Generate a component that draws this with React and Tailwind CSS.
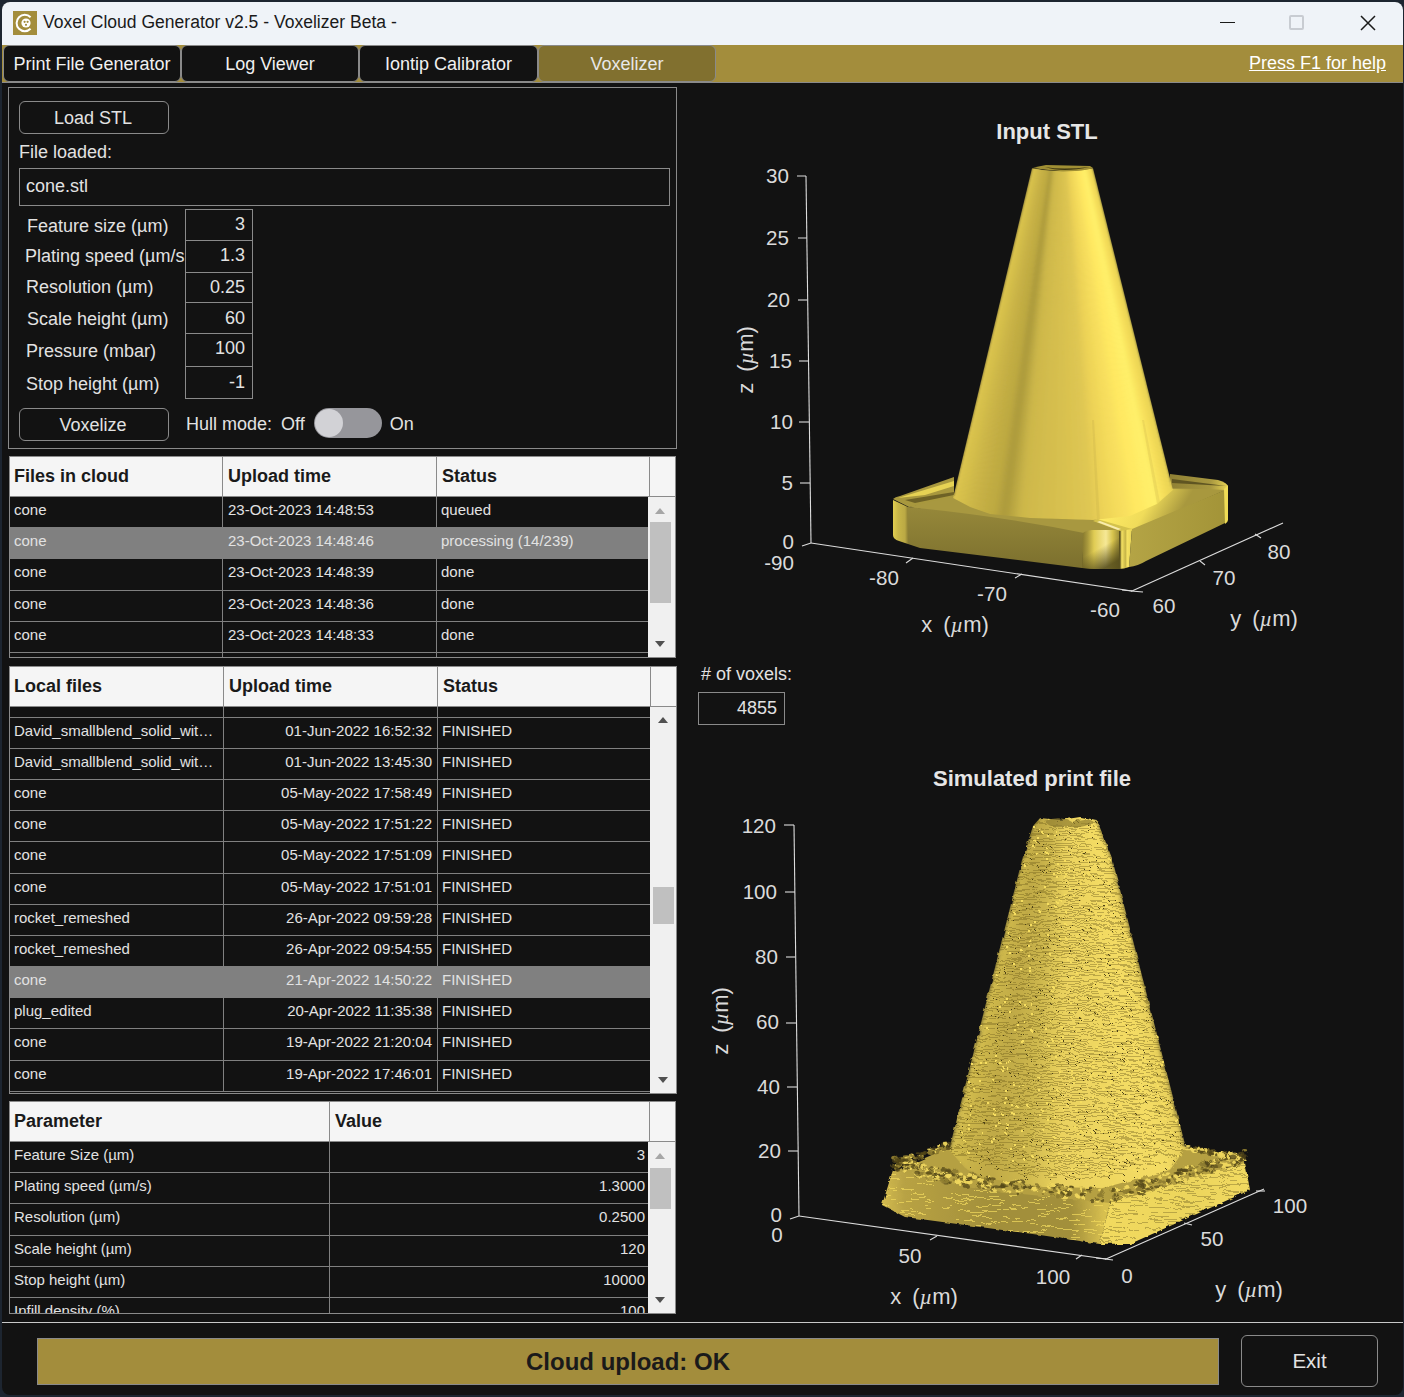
const cloudFiles = [
  ["cone", "23-Oct-2023 14:48:53", "queued"],
  ["cone", "23-Oct-2023 14:48:46", "processing (14/239)", true],
  ["cone", "23-Oct-2023 14:48:39", "done"],
  ["cone", "23-Oct-2023 14:48:36", "done"],
  ["cone", "23-Oct-2023 14:48:33", "done"],
  ["", "", ""],
];

const localFiles = [
  ["David_smallblend_solid_wit…", "01-Jun-2022 16:52:32", "FINISHED"],
  ["David_smallblend_solid_wit…", "01-Jun-2022 13:45:30", "FINISHED"],
  ["cone", "05-May-2022 17:58:49", "FINISHED"],
  ["cone", "05-May-2022 17:51:22", "FINISHED"],
  ["cone", "05-May-2022 17:51:09", "FINISHED"],
  ["cone", "05-May-2022 17:51:01", "FINISHED"],
  ["rocket_remeshed", "26-Apr-2022 09:59:28", "FINISHED"],
  ["rocket_remeshed", "26-Apr-2022 09:54:55", "FINISHED"],
  ["cone", "21-Apr-2022 14:50:22", "FINISHED", true],
  ["plug_edited", "20-Apr-2022 11:35:38", "FINISHED"],
  ["cone", "19-Apr-2022 21:20:04", "FINISHED"],
  ["cone", "19-Apr-2022 17:46:01", "FINISHED"],
];

const params = [
  ["Feature Size (µm)", "3"],
  ["Plating speed (µm/s)", "1.3000"],
  ["Resolution (µm)", "0.2500"],
  ["Scale height (µm)", "120"],
  ["Stop height (µm)", "10000"],
  ["Infill density (%)", "100"],
];

const fields = [
  { label: "Feature size (µm)", value: "3", row: "h-[32px]", lab: "pl-[8px] pt-[4px]", val: "pt-[1px]" },
  { label: "Plating speed (µm/s", value: "1.3", row: "h-[32px]", lab: "pl-[6px] pt-[2px]", val: "pt-[1px]" },
  { label: "Resolution (µm)", value: "0.25", row: "h-[30px]", lab: "pl-[7px] pt-[1px]", val: "pt-[1px]" },
  { label: "Scale height (µm)", value: "60", row: "h-[31px]", lab: "pl-[8px] pt-[3px]", val: "pt-[2px]" },
  { label: "Pressure (mbar)", value: "100", row: "h-[33px]", lab: "pl-[7px] pt-[4px]", val: "pt-[1px]" },
  { label: "Stop height (µm)", value: "-1", row: "h-[32px]", lab: "pl-[7px] pt-[4px]", val: "pt-[2px]" },
];

const tabs = [
  ["Print File Generator", "w-[178px]"],
  ["Log Viewer", "w-[178px]"],
  ["Iontip Calibrator", "w-[179px]"],
  ["Voxelizer", "w-[178px]"],
];

function Arrow({ up, dark }) {
  return (
    <svg width="12" height="8" viewBox="0 0 12 8" className="block">
      <path d={up ? "M6 1 L11 7 L1 7 Z" : "M1 1 L11 1 L6 7 Z"} fill={dark ? "#505050" : "#a6a6a6"} />
    </svg>
  );
}

function Scrollbar({ thumbTop, thumbHeight, upDark, upTop, wide }) {
  return (
    <div className={`relative shrink-0 bg-[#f0f0f0] ${wide ? "w-[26px]" : "w-[27px]"}`}>
      <div className={`absolute ${wide ? "left-[7px]" : "left-[6px]"}`} style={{ top: upTop }}>
        <Arrow up dark={upDark} />
      </div>
      <div className={`absolute w-[21px] bg-[#c0c0c0] ${wide ? "left-[3px]" : "left-[2px]"}`} style={{ top: thumbTop, height: thumbHeight }} />
      <div className={`absolute bottom-[9px] ${wide ? "left-[7px]" : "left-[6px]"}`}>
        <Arrow dark />
      </div>
    </div>
  );
}

function DataTable({ className, columns, children, scrollbar }) {
  return (
    <div className={`flex flex-col overflow-hidden border border-[#8a8a8a] bg-[#f5f5f5] ${className}`}>
      <div className="flex h-[40px] shrink-0 border-b border-[#8a8a8a]">
        {columns.map((c, i) => (
          <div
            key={c.name}
            className={`flex items-center border-r border-[#8a8a8a] text-[18px] font-bold text-[#1a1a1a] ${i === 0 ? "pl-[4px]" : "pl-[5px]"} ${c.width}`}
          >
            {c.name}
          </div>
        ))}
      </div>
      <div className="flex min-h-0 flex-1">
        <div className="min-w-0 flex-1 overflow-hidden bg-[#121212]">{children}</div>
        <Scrollbar {...scrollbar} />
      </div>
    </div>
  );
}

function Row({ cells, widths, selected, aligns = [] }) {
  return (
    <div className={`flex h-[31.2px] border-b border-[#808080] text-[15px] text-[#e2e2e2] ${selected ? "bg-[#808080]" : ""}`}>
      {cells.map((cell, i) => (
        <div
          key={i}
          className={`h-full shrink-0 whitespace-nowrap pb-[4px] leading-[26px] ${widths[i]} ${i < cells.length - 1 ? "border-r border-[#808080]" : ""} ${aligns[i] === "right" ? "pr-[4px] text-right" : aligns[i] === "time" ? "pr-[5px] text-right" : i === 1 ? "pl-[5px]" : "pl-[4px]"}`}
        >
          {cell}
        </div>
      ))}
    </div>
  );
}

function Button({ children, className }) {
  return (
    <button className={`rounded-[6px] border border-[#8a8a8a] pr-[2px] text-center text-[18px] text-[#e2e2e2] ${className}`}>{children}</button>
  );
}

// piecewise interpolation along a list of points, t in 0..1
function along(pts, t) {
  const f = Math.min(t * (pts.length - 1), pts.length - 1.0001);
  const i = Math.floor(f);
  const k = f - i;
  return [pts[i][0] + (pts[i + 1][0] - pts[i][0]) * k, pts[i][1] + (pts[i + 1][1] - pts[i][1]) * k];
}

function colorAt(stops, t) {
  let i = 0;
  while (i < stops.length - 2 && t > stops[i + 1][0]) i++;
  const [t0, c0] = stops[i];
  const [t1, c1] = stops[i + 1];
  const k = Math.max(0, Math.min(1, (t - t0) / (t1 - t0)));
  const rgb = [0, 1, 2].map((n) => Math.round(c0[n] + (c1[n] - c0[n]) * k));
  return `rgb(${rgb.join(",")})`;
}

function makeRandom(seed) {
  let s = seed;
  return () => {
    s = (s * 1664525 + 1013904223) % 4294967296;
    return s / 4294967296;
  };
}

const toPoints = (pts) => pts.map((q) => q.map((v) => v.toFixed(1)).join(",")).join(" ");

function Strips({ top, bottom, stops, n = 70 }) {
  const quads = [];
  for (let s = 0; s < n; s++) {
    const a = s / n;
    const b = (s + 1) / n;
    const fill = colorAt(stops, (a + b) / 2);
    quads.push(<polygon key={s} points={toPoints([along(top, a), along(top, b), along(bottom, b), along(bottom, a)])} fill={fill} stroke={fill} strokeWidth="1.2" />);
  }
  return <g>{quads}</g>;
}

// stair-stepped print layers running from edge a to edge b
function Contours({ a0, a1, b0, b1, spacing, sag = 0, stroke, opacity, seed, keep = 0.8 }) {
  const rand = makeRandom(seed);
  const levels = Math.round(Math.abs(a1[1] - a0[1]) / spacing);
  let d = "";
  for (let l = 0; l <= levels; l++) {
    const k = l / levels;
    const ax = a0[0] + (a1[0] - a0[0]) * k;
    const ay = a0[1] + (a1[1] - a0[1]) * k;
    const bx = b0[0] + (b1[0] - b0[0]) * k;
    const by = b0[1] + (b1[1] - b0[1]) * k;
    let x = ax;
    while (x < bx) {
      const w = 3 + rand() * 11;
      const u = (x - ax) / (bx - ax);
      const y = Math.round(ay + (by - ay) * u + Math.sin(u * Math.PI) * sag * (0.35 + k * 0.65));
      if (rand() < keep) d += `M${x.toFixed(1)} ${y}H${Math.min(x + w, bx).toFixed(1)}`;
      x += w;
    }
  }
  return <path d={d} stroke={stroke} strokeOpacity={opacity} strokeWidth="1" fill="none" shapeRendering="crispEdges" />;
}

function Specks({ count, box, color, size, seed }) {
  const rand = makeRandom(seed);
  let d = "";
  for (let i = 0; i < count; i++) {
    const x = Math.round(box[0] + rand() * box[2]);
    const y = Math.round(box[1] + rand() * box[3]);
    d += `M${x} ${y}h${size}v${size}h-${size}Z`;
  }
  return <path d={d} fill={color} shapeRendering="crispEdges" />;
}

const TICK = "#dcdcdc";
const AXIS_TEXT = "#dadada";

function Unit({ axis }) {
  return (
    <>
      {axis}
      {"\u2002("}
      <tspan fontFamily="'Liberation Serif', serif" fontStyle="italic">µ</tspan>
      {"m)"}
    </>
  );
}

function AxisLines({ lines }) {
  return (
    <g stroke={TICK} strokeWidth="1.1" fill="none">
      {lines.map((d, i) => (
        <path key={i} d={d} />
      ))}
    </g>
  );
}

function Labels({ items }) {
  return (
    <g fill={AXIS_TEXT} fontSize="20.6">
      {items.map(([text, x, y, anchor]) => (
        <text key={`${text}-${x}`} x={x} y={y} textAnchor={anchor || "middle"}>
          {text}
        </text>
      ))}
    </g>
  );
}

function InputPlot() {
  const coneTop = [[1032, 169], [1045, 171], [1062, 172], [1080, 171], [1093, 169]];
  const coneBottom = [[953, 498], [970, 507], [990, 514], [1030, 518], [1093, 520], [1130, 516], [1157, 504], [1173, 490]];
  const stops = [
    [0, [222, 198, 80]],
    [0.07, [214, 192, 76]],
    [0.2, [200, 178, 70]],
    [0.3, [190, 170, 66]],
    [0.34, [172, 154, 60]],
    [0.4, [205, 183, 74]],
    [0.56, [222, 198, 82]],
    [0.62, [238, 212, 88]],
    [0.75, [255, 232, 98]],
    [0.85, [255, 240, 106]],
    [0.93, [246, 222, 90]],
    [1, [232, 210, 84]],
  ];
  return (
    <svg viewBox="690 83 710 577" className="block h-[577px] w-[710px] shrink-0">
      <defs>
        <linearGradient id="frontFace" x1="0" y1="0" x2="0" y2="1">
          <stop offset="0" stopColor="#96883a" />
          <stop offset="1" stopColor="#7c702e" />
        </linearGradient>
        <linearGradient id="leftCorner" x1="0" y1="0" x2="1" y2="0">
          <stop offset="0" stopColor="#e2ce50" />
          <stop offset="0.35" stopColor="#c8b648" />
          <stop offset="0.8" stopColor="#bba944" />
          <stop offset="1" stopColor="#8d7f34" />
        </linearGradient>
        <linearGradient id="frontCorner" x1="1083" y1="0" x2="1120" y2="0" gradientUnits="userSpaceOnUse">
          <stop offset="0" stopColor="#8a7c30" />
          <stop offset="0.12" stopColor="#a8983c" />
          <stop offset="0.3" stopColor="#e0cc54" />
          <stop offset="0.62" stopColor="#f6e896" />
          <stop offset="0.8" stopColor="#d8c44e" />
          <stop offset="1" stopColor="#9a8a36" />
        </linearGradient>
        <linearGradient id="cornerShade" x1="0" y1="0" x2="0.55" y2="1">
          <stop offset="0.55" stopColor="#4f4719" stopOpacity="0" />
          <stop offset="1" stopColor="#4f4719" stopOpacity="0.85" />
        </linearGradient>
        <linearGradient id="rightStripes" x1="1120" y1="0" x2="1132" y2="0" gradientUnits="userSpaceOnUse">
          <stop offset="0" stopColor="#5c5320" />
          <stop offset="0.15" stopColor="#f5e262" />
          <stop offset="0.45" stopColor="#c7b548" />
          <stop offset="0.6" stopColor="#f5e262" />
          <stop offset="1" stopColor="#e8d456" />
        </linearGradient>
        <linearGradient id="rightFace" x1="0" y1="0" x2="1" y2="0">
          <stop offset="0" stopColor="#b4a445" />
          <stop offset="1" stopColor="#a39438" />
        </linearGradient>
        <linearGradient id="rightTop" x1="1110" y1="495" x2="1170" y2="530" gradientUnits="userSpaceOnUse">
          <stop offset="0" stopColor="#ffec66" />
          <stop offset="0.55" stopColor="#f0dc5a" />
          <stop offset="1" stopColor="#a8983e" />
        </linearGradient>
        <linearGradient id="backRight" x1="0" y1="0" x2="1" y2="0">
          <stop offset="0" stopColor="#8f8034" />
          <stop offset="0.7" stopColor="#a89840" />
          <stop offset="1" stopColor="#e6d254" />
        </linearGradient>
        <filter id="soft" x="-5%" y="-5%" width="110%" height="110%">
          <feGaussianBlur stdDeviation="1.4 0" />
        </filter>
        <clipPath id="coneClip">
          <polygon points={toPoints([[1032, 168], [1093, 168], ...[...coneBottom].reverse()])} />
        </clipPath>
      </defs>
      <text x="1047" y="139" fill="#e6e6e6" fontSize="22" fontWeight="700" textAnchor="middle">Input STL</text>

      <AxisLines
        lines={[
          "M806 176 L811 543", "M797 176 L806 176", "M798 238 L807 238", "M798 300 L807 300", "M799 361 L808 361", "M799 422 L809 422", "M800 483 L810 483", "M802 546 L811 543",
          "M811 543 L1132 591", "M906 563 L913 558", "M1015 578 L1022 574", "M1122 590 L1132 591",
          "M1132 591 L1283 523", "M1131 591 L1143 592", "M1200 561 L1205 565", "M1255 534 L1261 538",
        ]}
      />
      <Labels
        items={[
          ["30", 789, 183, "end"], ["25", 789, 245, "end"], ["20", 790, 307, "end"], ["15", 792, 368, "end"], ["10", 793, 429, "end"], ["5", 793, 490, "end"], ["0", 794, 549, "end"],
          ["-90", 794, 570, "end"], ["-80", 884, 585], ["-70", 992, 601], ["-60", 1105, 617],
          ["60", 1164, 613], ["70", 1224, 585], ["80", 1279, 559],
        ]}
      />
      <g fill={AXIS_TEXT} fontSize="22">
        <text x="955" y="632" textAnchor="middle"><Unit axis="x" /></text>
        <text x="1264" y="626" textAnchor="middle"><Unit axis="y" /></text>
        <text transform="translate(753 360) rotate(-90)" textAnchor="middle"><Unit axis="z" /></text>
      </g>

      {/* base of the cone, back surfaces first */}
      <path d="M893 499 Q895 497 900 496 L954 477 L954 499 L909 507 Z" fill="#a8983e" />
      <path d="M898 498 L954 481 L954 486 L925 495 Z" fill="#e6d254" />
      <path d="M905 500 L954 492 L954 495 L915 503 Z" fill="#6e6226" />
      <path d="M1170 474 L1218 480 Q1228 483 1228 487 L1225 491 L1170 494 Z" fill="url(#backRight)" />
      <path d="M1172 483 L1226 486 L1172 479 Z" fill="#5f5522" />
      <path d="M908 507 L954 496 L1172 488 L1225 490 L1132 531 L1084 534 Z" fill="#a89840" />
      <path d="M1095 518 L1160 500 L1172 489 L1225 490 L1132 530 L1120 530 Z" fill="url(#rightTop)" />
      <path d="M1132 529 L1225 490 L1225 523 L1146 561 Q1138 566 1129 567 Z" fill="url(#rightFace)" />
      <path d="M1224 489 L1228 485 L1228 520 Q1228 522 1225 524 Z" fill="#efdc56" />
      <path d="M908 507 Q1000 516 1084 533 L1082 568 L920 548 L908 544 Z" fill="url(#frontFace)" />
      <path d="M893 500 L908 507 L908 544 L899 541 Q893 539 893 535 Z" fill="url(#leftCorner)" />
      <path d="M1083 533 Q1085 531 1092 530 L1120 530 L1120 569 L1100 569 Q1090 569 1082 568 Z" fill="url(#frontCorner)" />
      <path d="M1083 533 Q1085 531 1092 530 L1120 530 L1120 569 L1100 569 Q1090 569 1082 568 Z" fill="url(#cornerShade)" />
      <path d="M1119 530 L1132 528 L1129 567 Q1124 569 1119 569 Z" fill="url(#rightStripes)" />
      <path d="M1097 519 L1132 529 L1120 531 L1093 521 Z" fill="#d4c24c" />
      <path d="M1100 521 L1121 529 L1118 530 L1097 522 Z" fill="#f8ecae" />

      {/* cone body */}
      <g clipPath="url(#coneClip)">
        <g filter="url(#soft)">
          <Strips top={coneTop} bottom={coneBottom} stops={stops} />
        </g>
        <path d="M1092 420 L1097 522 L1100 522 L1094 420 Z" fill="#c7b04a" opacity="0.3" />
        <path d="M1142 420 L1157 504 L1160 502 L1144 420 Z" fill="#d8bf50" opacity="0.35" />
      </g>
      <path d="M1033 168 Q1040 166 1046 165 L1090 166 L1093 168 Q1080 172 1060 171 Q1046 170 1033 168 Z" fill="#a08f34" />
      <path d="M1045 167 Q1062 173 1090 167 Q1062 170 1045 167 Z" fill="#3f3812" />
    </svg>
  );
}

function PrintPlot() {
  const coneTop = [[1022, 860], [1033, 826], [1040, 818], [1060, 820], [1080, 817], [1097, 820], [1112, 858]];
  const coneBottom = [[949, 1150], [965, 1168], [985, 1178], [1043, 1187], [1103, 1188], [1170, 1170], [1186, 1148]];
  const stops = [
    [0, [218, 196, 84]],
    [0.1, [206, 184, 76]],
    [0.35, [192, 170, 70]],
    [0.45, [206, 184, 78]],
    [0.55, [234, 210, 94]],
    [0.8, [244, 220, 100]],
    [1, [230, 206, 90]],
  ];
  const rimFront = [[893, 1170], [947, 1183], [1003, 1192], [1110, 1203], [1187, 1180], [1245, 1163]];
  const rand = makeRandom(17);
  const blobs = [];
  const addBlobs = (line, count, spread) => {
    for (let i = 0; i < count; i++) {
      const [x, y] = along(line, rand());
      const pick = rand();
      blobs.push(
        <ellipse
          key={blobs.length}
          cx={x}
          cy={y - rand() * spread}
          rx={1 + rand() * 2.8}
          ry={0.7 + rand() * 1.6}
          fill={pick < 0.45 ? "#54481a" : pick < 0.7 ? "#8f7d30" : "#efd75e"}
          opacity={pick < 0.45 ? 0.75 : 0.95}
        />
      );
    }
  };
  addBlobs(rimFront, 430, 13);
  addBlobs([[895, 1166], [950, 1148]], 70, 6);
  addBlobs([[1188, 1150], [1244, 1161]], 80, 5);

  const coneOutline = toPoints([[1022, 860], [1033, 826], [1040, 818], [1060, 820], [1080, 817], [1097, 820], [1112, 858], ...[...coneBottom].reverse()]);

  return (
    <svg viewBox="690 760 710 560" className="block h-[560px] w-[710px] shrink-0">
      <defs>
        <filter id="rough" x="-3%" y="-3%" width="106%" height="106%">
          <feTurbulence type="fractalNoise" baseFrequency="0.14" numOctaves="3" seed="4" result="noise" />
          <feDisplacementMap in="SourceGraphic" in2="noise" scale="4" />
        </filter>
        <filter id="softVoxel" x="-5%" y="-5%" width="110%" height="110%">
          <feGaussianBlur stdDeviation="2.5 0" />
        </filter>
        <clipPath id="printCone">
          <polygon points={coneOutline} />
        </clipPath>
        <clipPath id="printLeft">
          <polygon points="893,1170 947,1183 1003,1192 1110,1203 1100,1244 1040,1235 905,1217 882,1205" />
        </clipPath>
        <clipPath id="printRight">
          <polygon points="1110,1203 1187,1180 1245,1163 1250,1190 1130,1244 1100,1244" />
        </clipPath>
        <linearGradient id="voxelFront" x1="882" y1="0" x2="1104" y2="0" gradientUnits="userSpaceOnUse">
          <stop offset="0" stopColor="#d4bc50" />
          <stop offset="0.1" stopColor="#b8a244" />
          <stop offset="0.5" stopColor="#a28f3a" />
          <stop offset="0.85" stopColor="#a28f3a" />
          <stop offset="1" stopColor="#d8c050" />
        </linearGradient>
        <linearGradient id="voxelRight" x1="1100" y1="0" x2="1250" y2="0" gradientUnits="userSpaceOnUse">
          <stop offset="0" stopColor="#f2da5e" />
          <stop offset="0.6" stopColor="#ecd55c" />
          <stop offset="1" stopColor="#f2da60" />
        </linearGradient>
      </defs>
      <text x="1032" y="786" fill="#e6e6e6" fontSize="22" fontWeight="700" textAnchor="middle">Simulated print file</text>

      <AxisLines
        lines={[
          "M794 825 L799 1216", "M784 825 L794 825", "M785 892 L795 892", "M786 957 L795 957", "M786 1023 L796 1023", "M787 1087 L797 1087", "M788 1151 L798 1151", "M790 1219 L799 1216",
          "M799 1216 L1106 1259", "M930 1240 L937 1236", "M1076 1259 L1082 1255", "M1096 1258 L1106 1259",
          "M1106 1259 L1264 1189", "M1105 1259 L1113 1260", "M1184 1223 L1192 1225", "M1256 1191 L1265 1191",
        ]}
      />
      <Labels
        items={[
          ["120", 776, 833, "end"], ["100", 777, 899, "end"], ["80", 778, 964, "end"], ["60", 779, 1029, "end"], ["40", 780, 1094, "end"], ["20", 781, 1158, "end"], ["0", 782, 1222, "end"],
          ["0", 777, 1242], ["50", 910, 1263], ["100", 1053, 1284], ["0", 1127, 1283], ["50", 1212, 1246], ["100", 1290, 1213],
        ]}
      />
      <g fill={AXIS_TEXT} fontSize="22">
        <text x="924" y="1304" textAnchor="middle"><Unit axis="x" /></text>
        <text x="1249" y="1297" textAnchor="middle"><Unit axis="y" /></text>
        <text transform="translate(728 1021) rotate(-90)" textAnchor="middle"><Unit axis="z" /></text>
      </g>

      <g filter="url(#rough)">
        <path d="M893 1172 L950 1147 L1188 1147 L1240 1156 Q1246 1162 1245 1168 L1110 1206 L1000 1196 L890 1180 Z" fill="#b5a042" />
        <polygon points="893,1170 947,1183 1003,1192 1110,1203 1100,1244 1040,1235 905,1217 882,1205" fill="url(#voxelFront)" />
        <g clipPath="url(#printLeft)">
          <Contours a0={[880, 1170]} a1={[880, 1210]} b0={[1110, 1204]} b1={[1110, 1246]} spacing={3} stroke="#f2da5c" opacity={0.7} seed={3} keep={0.35} />
        </g>
        <polygon points="1110,1203 1187,1180 1245,1163 1250,1190 1130,1244 1100,1244" fill="url(#voxelRight)" />
        <g clipPath="url(#printRight)">
          <Contours a0={[1095, 1200]} a1={[1095, 1246]} b0={[1252, 1160]} b1={[1252, 1194]} spacing={3} sag={2} stroke="#6e5f20" opacity={0.4} seed={5} keep={0.6} />
        </g>

        <g clipPath="url(#printCone)">
          <g filter="url(#softVoxel)">
            <Strips top={coneTop} bottom={coneBottom} stops={stops} />
          </g>
          <Contours a0={[1020, 816]} a1={[940, 1150]} b0={[1100, 816]} b1={[1190, 1150]} spacing={2.3} sag={28} stroke="#75651f" opacity={0.42} seed={7} keep={0.85} />
          <Specks count={1300} box={[950, 816, 240, 372]} color="#4e4316" size={1} seed={11} />
          <Specks count={550} box={[950, 816, 240, 372]} color="#f6de60" size={1.5} seed={23} />
        </g>
        <path d="M1044 821 Q1060 815 1072 822 Q1086 816 1094 822 Q1080 830 1066 826 Q1054 830 1044 821 Z" fill="#8f7d30" opacity="0.7" />
        {blobs}
      </g>
    </svg>
  );
}

export default function App() {
  const cols1 = ["w-[213px]", "w-[214px]", "w-[212px]"];
  const cols2 = ["w-[214px]", "w-[214px]", "w-[212px]"];
  const cols3 = ["w-[320px]", "w-[319px]"];
  return (
    <div className="h-[1397px] w-[1404px] overflow-hidden bg-[#1d2530] pt-[2px] pl-[2px] pr-[1px] font-['Liberation_Sans',Arial,sans-serif]">
      <div className="flex h-[1393px] flex-col overflow-hidden rounded-[8px] bg-[#121212]">
        {/* title bar */}
        <div className="flex h-[43px] shrink-0 items-center bg-[#eff3f8] pb-[2px] pl-[11px] text-[#1a1a1a]">
          <svg width="24" height="24" viewBox="0 0 24 24" className="shrink-0">
            <rect width="24" height="24" fill="#a38d3c" />
            <path d="M17.6 6.2 A8.2 8.2 0 1 0 17.6 17.8" fill="none" stroke="#fff" strokeWidth="2" />
            <circle cx="13" cy="12" r="4.6" fill="#fff" />
            <circle cx="11.6" cy="10.8" r="1.1" fill="#a38d3c" />
            <circle cx="14.6" cy="10.8" r="1.1" fill="#a38d3c" />
            <circle cx="13" cy="13.8" r="1.1" fill="#a38d3c" />
          </svg>
          <span className="ml-[6px] text-[17.55px]">Voxel Cloud Generator v2.5 - Voxelizer Beta -</span>
          <div className="ml-auto flex items-center pr-[27px]">
            <div className="h-[1.5px] w-[15px] bg-[#1a1a1a]" />
            <div className="ml-[54px] h-[15px] w-[15px] rounded-[2px] border-2 border-[#c8ccd2]" />
            <svg width="16" height="16" viewBox="0 0 16 16" className="ml-[56px]">
              <path d="M1 1 L15 15 M15 1 L1 15" stroke="#1a1a1a" strokeWidth="1.5" />
            </svg>
          </div>
        </div>

        {/* tabs */}
        <div className="flex h-[38px] shrink-0 items-end border-b border-[#8a8a8a] bg-[#a38d3c] pl-px text-[18px] text-[#f0f0f0]">
          {tabs.map(([t, w], i) => (
            <div
              key={t}
              className={`flex h-[37px] items-center justify-center rounded-[6px] border border-[#8a8a8a] pt-px ${w} ${i === 3 ? "bg-[#81702f] text-[#e8e8e8]" : "bg-[#121212]"}`}
            >
              {t}
            </div>
          ))}
          <a className="mb-[5px] ml-auto mr-[17px] text-[18px] text-white underline">Press F1 for help</a>
        </div>

        {/* main */}
        <div className="flex min-h-0 flex-1">
          <div className="ml-[6px] flex w-[669px] shrink-0 flex-col pt-[4px]">
            <div className="h-[362px] shrink-0 border border-[#8a8a8a] px-[10px] pt-[13px] text-[18px] text-[#e2e2e2]">
              <Button className="block h-[33px] w-[150px] pt-[1px]">Load STL</Button>
              <div className="mt-[7px] h-[27px] leading-[22px]">File loaded:</div>
              <div className="flex h-[38px] w-[651px] items-center border border-[#8a8a8a] pb-[2px] pl-[6px]">cone.stl</div>
              <div className="mt-[3px] flex w-[234px] flex-col">
                {fields.map((f, i) => (
                  <div key={f.label} className={`flex ${f.row}`}>
                    <div className={`w-[166px] whitespace-nowrap ${f.lab}`}>{f.label}</div>
                    <div className={`w-[68px] border-x border-b border-[#8a8a8a] pr-[7px] text-right ${f.val} ${i === 0 ? "border-t" : ""}`}>{f.value}</div>
                  </div>
                ))}
              </div>
              <div className="mt-[9px] flex items-start">
                <Button className="h-[33px] w-[150px] pt-[1px]">Voxelize</Button>
                <span className="ml-[17px] mt-[3px]">Hull mode:</span>
                <span className="ml-[9px] mt-[3px]">Off</span>
                <div className="relative ml-[9px] h-[30px] w-[68px] rounded-full bg-[#96969b]">
                  <div className="absolute left-px top-px h-[28px] w-[28px] rounded-full bg-[#d2d2d6]" />
                </div>
                <span className="ml-[8px] mt-[3px]">On</span>
              </div>
            </div>

            <DataTable
              className="ml-px mt-[7px] h-[202px] w-[667px] shrink-0"
              columns={[
                { name: "Files in cloud", width: "w-[213px]" },
                { name: "Upload time", width: "w-[214px]" },
                { name: "Status", width: "w-[213px]" },
              ]}
              scrollbar={{ thumbTop: 25, thumbHeight: 81, upTop: 10 }}
            >
              {cloudFiles.map((r, i) => (
                <Row key={i} cells={r.slice(0, 3)} widths={cols1} selected={r[3]} />
              ))}
            </DataTable>

            <DataTable
              className="ml-px mt-[8px] h-[428px] w-[668px] shrink-0"
              columns={[
                { name: "Local files", width: "w-[214px]" },
                { name: "Upload time", width: "w-[214px]" },
                { name: "Status", width: "w-[213px]" },
              ]}
              scrollbar={{ thumbTop: 180, thumbHeight: 37, upTop: 9, upDark: true, wide: true }}
            >
              <div className="flex h-[10.6px] border-b border-[#808080]">
                <div className="w-[214px] border-r border-[#808080]" />
                <div className="w-[214px] border-r border-[#808080]" />
              </div>
              {localFiles.map((r, i) => (
                <Row key={i} cells={r.slice(0, 3)} widths={cols2} selected={r[3]} aligns={["left", "time", "left"]} />
              ))}
            </DataTable>

            <DataTable
              className="ml-px mt-[7px] h-[213px] w-[667px] shrink-0"
              columns={[
                { name: "Parameter", width: "w-[320px]" },
                { name: "Value", width: "w-[320px]" },
              ]}
              scrollbar={{ thumbTop: 26, thumbHeight: 41, upTop: 10 }}
            >
              {params.map((r) => (
                <Row key={r[0]} cells={r} widths={cols3} aligns={["left", "right"]} />
              ))}
            </DataTable>
          </div>

          <div className="ml-[13px] flex flex-col">
            <InputPlot />
            <div className="h-[100px] shrink-0 pl-[8px] text-[#e2e2e2]">
              <div className="ml-[3px] h-[32px] text-[18px] leading-[28px]">#&nbsp;of voxels:</div>
              <div className="flex h-[33px] w-[87px] items-center justify-end border border-[#8a8a8a] pr-[7px] text-[18px]">4855</div>
            </div>
            <PrintPlot />
          </div>
        </div>

        {/* footer */}
        <div className="flex h-[73px] shrink-0 items-start border-t border-[#c8c8c8] pl-[35px]">
          <div className="mt-[15px] flex h-[47px] w-[1182px] items-center justify-center border border-[#8a8a8a] bg-[#a38d3c] text-[24px] font-bold text-[#1a1a1a]">
            Cloud upload: OK
          </div>
          <button className="ml-[22px] mt-[12px] h-[52px] w-[137px] rounded-[6px] border border-[#8a8a8a] text-[20.5px] text-[#e2e2e2]">Exit</button>
        </div>
      </div>
    </div>
  );
}
